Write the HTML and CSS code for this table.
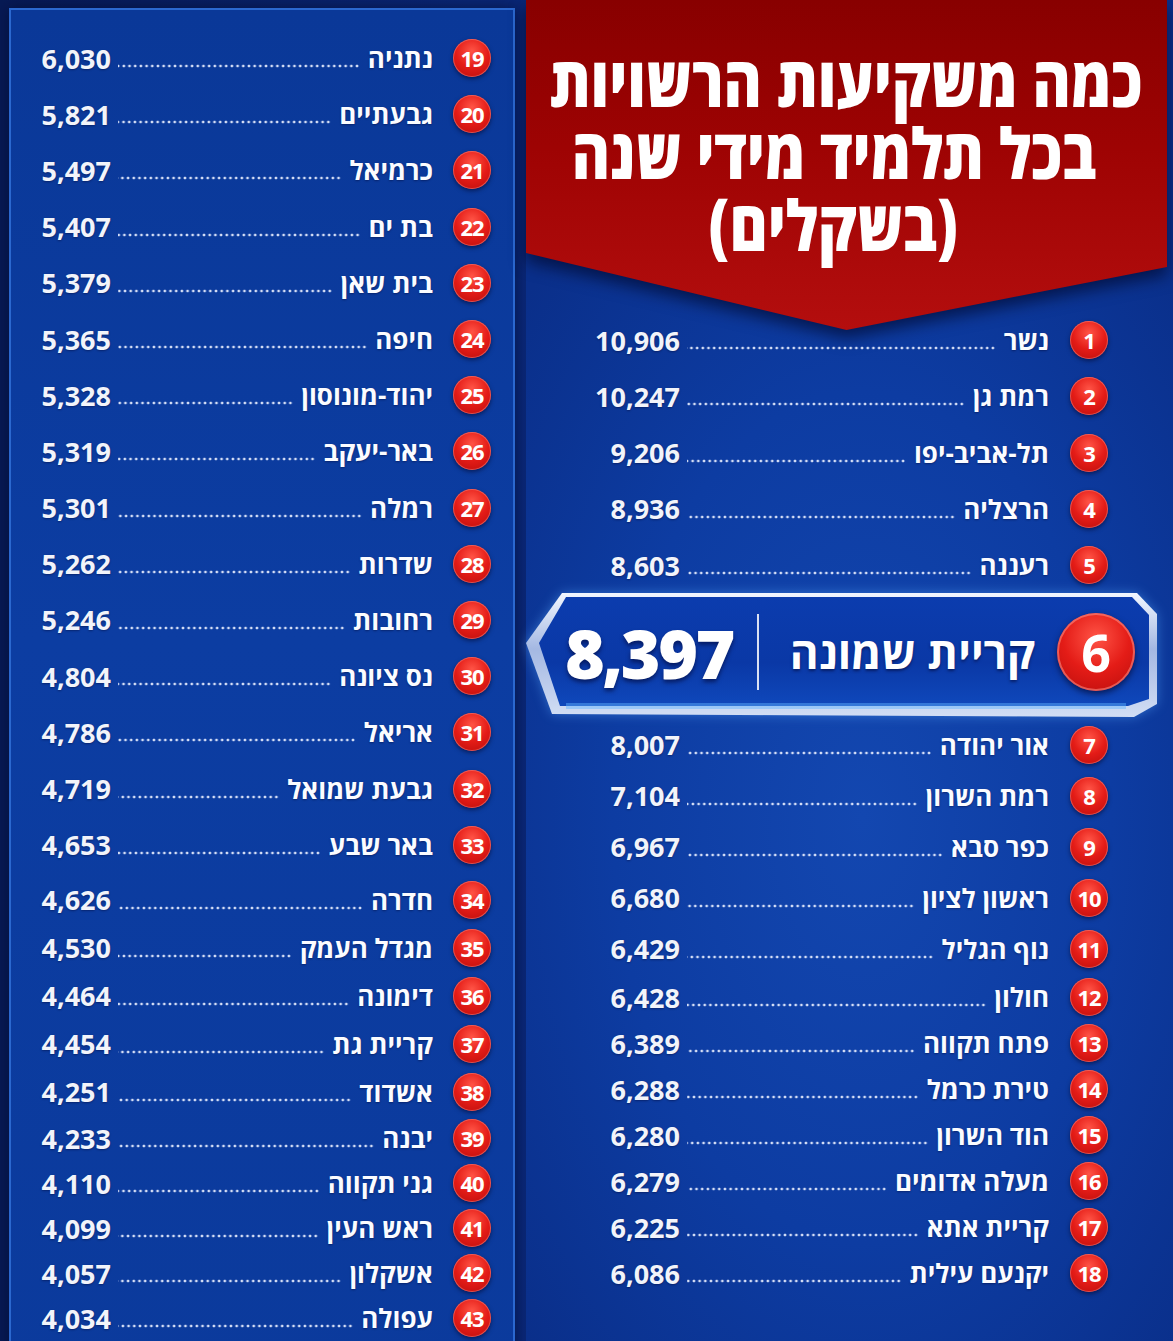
FILE: index.html
```html
<!DOCTYPE html>
<html lang="he">
<head>
<meta charset="utf-8">
<title>כמה משקיעות הרשויות בכל תלמיד מידי שנה</title>
<link rel="stylesheet" href="styles.css">
</head>
<body>
<div class="page">
  <section class="panel">
    <div class="group ga">
      <div class="row"><span class="badge">19</span><span class="name">נתניה</span><span class="leader"></span><span class="num">6,030</span></div>
      <div class="row"><span class="badge">20</span><span class="name">גבעתיים</span><span class="leader"></span><span class="num">5,821</span></div>
      <div class="row"><span class="badge">21</span><span class="name">כרמיאל</span><span class="leader"></span><span class="num">5,497</span></div>
      <div class="row"><span class="badge">22</span><span class="name">בת ים</span><span class="leader"></span><span class="num">5,407</span></div>
      <div class="row"><span class="badge">23</span><span class="name">בית שאן</span><span class="leader"></span><span class="num">5,379</span></div>
      <div class="row"><span class="badge">24</span><span class="name">חיפה</span><span class="leader"></span><span class="num">5,365</span></div>
      <div class="row"><span class="badge">25</span><span class="name">יהוד-מונוסון</span><span class="leader"></span><span class="num">5,328</span></div>
      <div class="row"><span class="badge">26</span><span class="name">באר-יעקב</span><span class="leader"></span><span class="num">5,319</span></div>
      <div class="row"><span class="badge">27</span><span class="name">רמלה</span><span class="leader"></span><span class="num">5,301</span></div>
      <div class="row"><span class="badge">28</span><span class="name">שדרות</span><span class="leader"></span><span class="num">5,262</span></div>
      <div class="row"><span class="badge">29</span><span class="name">רחובות</span><span class="leader"></span><span class="num">5,246</span></div>
      <div class="row"><span class="badge">30</span><span class="name">נס ציונה</span><span class="leader"></span><span class="num">4,804</span></div>
      <div class="row"><span class="badge">31</span><span class="name">אריאל</span><span class="leader"></span><span class="num">4,786</span></div>
      <div class="row"><span class="badge">32</span><span class="name">גבעת שמואל</span><span class="leader"></span><span class="num">4,719</span></div>
      <div class="row"><span class="badge">33</span><span class="name">באר שבע</span><span class="leader"></span><span class="num">4,653</span></div>
    </div>
    <div class="group gb">
      <div class="row"><span class="badge">34</span><span class="name">חדרה</span><span class="leader"></span><span class="num">4,626</span></div>
      <div class="row"><span class="badge">35</span><span class="name">מגדל העמק</span><span class="leader"></span><span class="num">4,530</span></div>
      <div class="row"><span class="badge">36</span><span class="name">דימונה</span><span class="leader"></span><span class="num">4,464</span></div>
      <div class="row"><span class="badge">37</span><span class="name">קריית גת</span><span class="leader"></span><span class="num">4,454</span></div>
      <div class="row"><span class="badge">38</span><span class="name">אשדוד</span><span class="leader"></span><span class="num">4,251</span></div>
    </div>
    <div class="group gc">
      <div class="row"><span class="badge">39</span><span class="name">יבנה</span><span class="leader"></span><span class="num">4,233</span></div>
      <div class="row"><span class="badge">40</span><span class="name">גני תקווה</span><span class="leader"></span><span class="num">4,110</span></div>
      <div class="row"><span class="badge">41</span><span class="name">ראש העין</span><span class="leader"></span><span class="num">4,099</span></div>
      <div class="row"><span class="badge">42</span><span class="name">אשקלון</span><span class="leader"></span><span class="num">4,057</span></div>
      <div class="row"><span class="badge">43</span><span class="name">עפולה</span><span class="leader"></span><span class="num">4,034</span></div>
    </div>
  </section>

  <section class="main">
    <div class="banner-wrap">
      <header class="banner">
        <h1 class="title"><span class="tline">כמה משקיעות הרשויות</span><span class="tline shift">בכל תלמיד מידי שנה</span><span class="tline shift">(בשקלים)</span></h1>
      </header>
    </div>

    <div class="group ra">
      <div class="row"><span class="badge">1</span><span class="name">נשר</span><span class="leader"></span><span class="num">10,906</span></div>
      <div class="row"><span class="badge">2</span><span class="name">רמת גן</span><span class="leader"></span><span class="num">10,247</span></div>
      <div class="row"><span class="badge">3</span><span class="name">תל-אביב-יפו</span><span class="leader"></span><span class="num">9,206</span></div>
      <div class="row"><span class="badge">4</span><span class="name">הרצליה</span><span class="leader"></span><span class="num">8,936</span></div>
      <div class="row"><span class="badge">5</span><span class="name">רעננה</span><span class="leader"></span><span class="num">8,603</span></div>
    </div>

    <div class="feature">
      <svg class="feature-frame" width="634" height="126" viewBox="0 0 634 126" aria-hidden="true">
        <defs>
          <linearGradient id="rim" x1="0" y1="0" x2="0" y2="1">
            <stop offset="0" stop-color="#f2f7ff"/>
            <stop offset="0.45" stop-color="#a4b8e2"/>
            <stop offset="1" stop-color="#d2def4"/>
          </linearGradient>
          <linearGradient id="face" x1="0" y1="0" x2="0" y2="1">
            <stop offset="0" stop-color="#0b3cae"/>
            <stop offset="0.6" stop-color="#0a38a6"/>
            <stop offset="1" stop-color="#0f48bb"/>
          </linearGradient>
          <linearGradient id="glow" x1="0" y1="0" x2="1" y2="0">
            <stop offset="0" stop-color="#7fc4ff" stop-opacity="0.3"/>
            <stop offset="0.15" stop-color="#e6f6ff"/>
            <stop offset="0.85" stop-color="#e6f6ff"/>
            <stop offset="1" stop-color="#7fc4ff" stop-opacity="0.3"/>
          </linearGradient>
        </defs>
        <polygon points="36,0 611,0 631,21 631,111 608,124 26,121 0,50" fill="url(#rim)"/>
        <polygon points="40,4 606,4 623,22 623,106 602,113 34,113 13,50" fill="url(#face)"/>
        <line x1="40" y1="113" x2="600" y2="113" stroke="#5fb4ff" stroke-width="6" stroke-opacity="0.45"/>
        <line x1="44" y1="113" x2="598" y2="113" stroke="url(#glow)" stroke-width="2.5"/>
      </svg>
      <div class="feature-content">
        <span class="badge big">6</span>
        <span class="feature-name">קריית שמונה</span>
        <span class="divider"></span>
        <span class="feature-num">8,397</span>
      </div>
    </div>

    <div class="group rb">
      <div class="row"><span class="badge">7</span><span class="name">אור יהודה</span><span class="leader"></span><span class="num">8,007</span></div>
      <div class="row"><span class="badge">8</span><span class="name">רמת השרון</span><span class="leader"></span><span class="num">7,104</span></div>
      <div class="row"><span class="badge">9</span><span class="name">כפר סבא</span><span class="leader"></span><span class="num">6,967</span></div>
      <div class="row"><span class="badge">10</span><span class="name">ראשון לציון</span><span class="leader"></span><span class="num">6,680</span></div>
      <div class="row"><span class="badge">11</span><span class="name">נוף הגליל</span><span class="leader"></span><span class="num">6,429</span></div>
    </div>
    <div class="group rc">
      <div class="row"><span class="badge">12</span><span class="name">חולון</span><span class="leader"></span><span class="num">6,428</span></div>
      <div class="row"><span class="badge">13</span><span class="name">פתח תקווה</span><span class="leader"></span><span class="num">6,389</span></div>
      <div class="row"><span class="badge">14</span><span class="name">טירת כרמל</span><span class="leader"></span><span class="num">6,288</span></div>
      <div class="row"><span class="badge">15</span><span class="name">הוד השרון</span><span class="leader"></span><span class="num">6,280</span></div>
      <div class="row"><span class="badge">16</span><span class="name">מעלה אדומים</span><span class="leader"></span><span class="num">6,279</span></div>
      <div class="row"><span class="badge">17</span><span class="name">קריית אתא</span><span class="leader"></span><span class="num">6,225</span></div>
      <div class="row"><span class="badge">18</span><span class="name">יקנעם עילית</span><span class="leader"></span><span class="num">6,086</span></div>
    </div>
  </section>
</div>
</body>
</html>
```

FILE: styles.css
```css
* { box-sizing: border-box; }

html, body {
  margin: 0;
  padding: 0;
}

body {
  width: 1173px;
  height: 1341px;
  overflow: hidden;
  background: linear-gradient(90deg, #071a55 0%, #0a2776 40%, #0a2d86 100%);
  font-family: "Open Sans", "Liberation Sans", "DejaVu Sans", sans-serif;
  color: #ffffff;
}

.page {
  display: grid;
  grid-template-columns: 506px 1fr;
  column-gap: 11px;
  padding-left: 9px;
  height: 1341px;
}

/* ---------- left panel ---------- */
.panel {
  margin-top: 8px;
  height: 1400px;
  border: 2px solid #2b68cf;
  border-bottom: none;
  background: linear-gradient(180deg, #0a3898 0%, #0c3da2 45%, #0b3a9c 100%);
  padding: 20px 22px 0 25px;
  box-shadow: 0 0 14px rgba(0, 8, 40, 0.6);
}

.group { display: flex; flex-direction: column; }

.ga .row { height: 56.2px; }
.gb { margin-top: 3px; }
.gb .row { height: 48px; }
.gc .row { height: 45px; }

/* ---------- rows ---------- */
.row {
  display: flex;
  direction: rtl;
  align-items: center;
}

.badge {
  flex: none;
  width: 38px;
  height: 38px;
  border-radius: 50%;
  display: flex;
  align-items: center;
  justify-content: center;
  background: radial-gradient(circle at 50% 32%, #ff5446 0%, #e41c17 50%, #b90d0c 100%);
  box-shadow: inset 0 0 0 1px rgba(255, 150, 140, 0.45), 0 2px 4px rgba(0, 0, 30, 0.5);
  font-weight: 700;
  font-size: 22px;
  letter-spacing: -1px;
  direction: ltr;
  color: #fff;
  line-height: 1;
}

.name {
  flex: none;
  margin-right: 20px;
  font-weight: 700;
  font-size: 26px;
  white-space: nowrap;
  color: #fbfcff;
  text-shadow: 0 1px 2px rgba(0, 0, 40, 0.4);
}

.leader {
  flex: 1;
  height: 4px;
  margin: 16px 8px 0 7px;
  background-image: radial-gradient(circle, rgba(235, 240, 255, 0.9) 1.1px, transparent 1.7px);
  background-size: 5.7px 4px;
  background-repeat: repeat-x;
  background-position: right center;
}

.num {
  flex: none;
  width: 75px;
  direction: ltr;
  text-align: right;
  font-weight: 700;
  font-size: 27px;
  color: #f2f4fa;
  text-shadow: 0 1px 2px rgba(0, 0, 40, 0.4);
}

/* ---------- main column ---------- */
.main {
  display: flex;
  flex-direction: column;
  background: radial-gradient(ellipse 70% 55% at 52% 58%, #1347b0 0%, #0d3ca2 55%, #0a2f8a 100%);
}

.banner-wrap {
  width: 641px;
  height: 330px;
  margin-bottom: -18px;
  filter: drop-shadow(0 8px 8px rgba(0, 6, 40, 0.65));
  position: relative;
  z-index: 1;
}

.banner {
  height: 330px;
  background: linear-gradient(180deg, #880000 0%, #9e0303 45%, #b40e0e 100%);
  clip-path: polygon(0 0, 100% 0, 100% 267px, 50% 330px, 0 253px);
  padding-top: 44px;
}

.title {
  margin: 0;
  display: flex;
  flex-direction: column;
  align-items: center;
  font-weight: 800;
  font-size: 70px;
  line-height: 72px;
  color: #ffffff;
}

.tline {
  display: block;
  height: 72px;
  white-space: nowrap;
  transform: scaleX(0.83);
}

.tline.shift { margin-right: 26px; }

.main .group { padding: 0 65px 0 62px; position: relative; z-index: 2; }
.main .num { width: 92px; }
.main .name { margin-right: 21px; }

.ra .row { height: 56.25px; }
.rb .row { height: 51px; }
.rc .row { height: 46px; }

/* ---------- featured row ---------- */
.feature {
  position: relative;
  width: 634px;
  height: 126px;
}

.feature-frame {
  position: absolute;
  left: 0;
  top: 0;
  filter: drop-shadow(0 0 6px rgba(90, 170, 255, 0.45));
}

.feature-content {
  position: relative;
  display: flex;
  direction: rtl;
  align-items: center;
  height: 100%;
  padding: 0 25px 8px 0;
}

.badge.big {
  width: 78px;
  height: 78px;
  font-size: 52px;
  letter-spacing: 0;
  box-shadow: inset 0 0 0 2px rgba(255, 160, 150, 0.5), 0 3px 6px rgba(0, 0, 30, 0.6);
}

.feature-name {
  margin-right: 22px;
  font-weight: 700;
  font-size: 44px;
  white-space: nowrap;
  text-shadow: 0 2px 3px rgba(0, 0, 40, 0.5);
}

.divider {
  width: 2px;
  height: 76px;
  margin-right: 31px;
  background: rgba(255, 255, 255, 0.85);
}

.feature-num {
  margin-right: 24px;
  direction: ltr;
  font-weight: 800;
  font-size: 68px;
  letter-spacing: -2.5px;
  text-shadow: 0 3px 4px rgba(0, 0, 40, 0.55);
}
```
